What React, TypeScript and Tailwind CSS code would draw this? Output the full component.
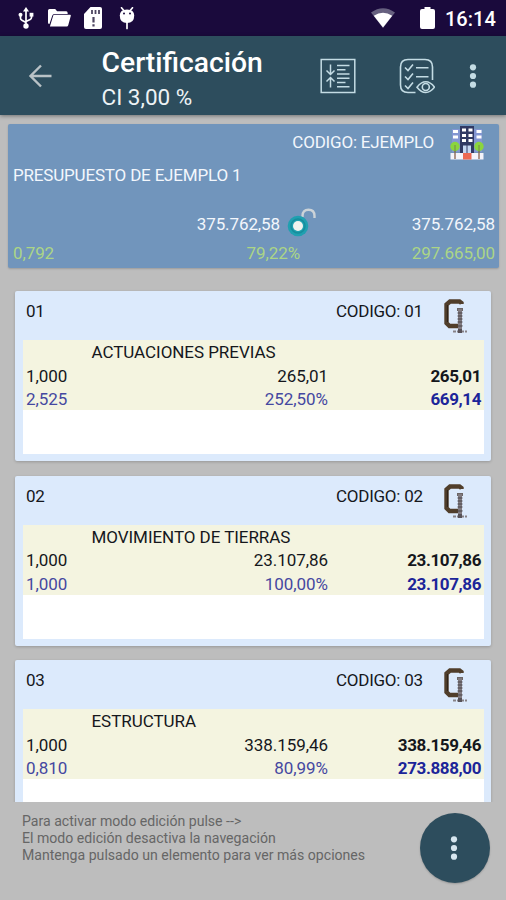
import type { ReactNode } from 'react'

type Chapter = {
  id: string
  title: string
  qty: string
  price: string
  total: string
  certQty: string
  certPercent: string
  certTotal: string
}

const chapters: Chapter[] = [
  { id: '01', title: 'ACTUACIONES PREVIAS', qty: '1,000', price: '265,01', total: '265,01', certQty: '2,525', certPercent: '252,50%', certTotal: '669,14' },
  { id: '02', title: 'MOVIMIENTO DE TIERRAS', qty: '1,000', price: '23.107,86', total: '23.107,86', certQty: '1,000', certPercent: '100,00%', certTotal: '23.107,86' },
  { id: '03', title: 'ESTRUCTURA', qty: '1,000', price: '338.159,46', total: '338.159,46', certQty: '0,810', certPercent: '80,99%', certTotal: '273.888,00' },
]

function UsbIcon() {
  return (
    <svg className="w-4 h-[22px]" viewBox="0 0 16 22" fill="none" stroke="white" strokeWidth="1.7">
      <path d="M8 4v14M2.5 8v3.2q0 1.3 1.4 2L8 15.4M13.5 8v2.4q0 1.3-1.4 2L8 14.4" />
      <path d="M8 0l3 4.6H5z" fill="white" stroke="none" />
      <circle cx="2.5" cy="7.8" r="2" fill="white" stroke="none" />
      <path d="M11.6 5.8h3.8v3.8h-3.8z" fill="white" stroke="none" />
      <circle cx="8" cy="19" r="2.7" fill="white" stroke="none" />
    </svg>
  )
}

function FolderIcon() {
  return (
    <svg className="w-[23px] h-[18px]" viewBox="0 0 24 18" preserveAspectRatio="none" fill="white">
      <path d="M1.5 0h6l2 2.2h9.5q1.5 0 1.5 1.8v1H6.5Q5 5 4.5 6.5L1.5 15Q0 15 0 13.5V1.5Q0 0 1.5 0z" />
      <path d="M6.4 5.7H23q1 0 .8 1l-2.6 9.300q-.4 1.500-1.700 1.500H2L5.400 6.700q.3-1 1-1z" />
    </svg>
  )
}

function SdIcon() {
  return (
    <svg className="w-[18px] h-[22px]" viewBox="0 0 18 22">
      <path d="M6.5 0H16q2 0 2 2v18q0 2-2 2H2q-2 0-2-2V7z" fill="white" />
      <path d="M8 3v4M11.5 3v4M15 3v4" stroke="#4d4560" strokeWidth="1.8" />
      <path d="M9.500 10v5.500M9.500 17.300v2.200" stroke="#4d4560" strokeWidth="2.2" />
    </svg>
  )
}

function DebugIcon() {
  return (
    <svg className="w-4 h-[23px]" viewBox="0 0 16 23">
      <path d="M2.5.8l2.500 3M13.5.8l-2.500 3M8 15v6.500" stroke="white" strokeWidth="1.7" strokeLinecap="round" />
      <path d="M.8 8.5Q.8 2.5 8 2.500t7.200 6Q15.200 16 8 16T.8 8.500z" fill="white" />
      <circle cx="5" cy="6.500" r="1" fill="#1a0a3c" />
      <circle cx="11" cy="6.500" r="1" fill="#1a0a3c" />
    </svg>
  )
}

function StatusBar() {
  return (
    <div className="h-9 shrink-0 bg-[#1a0a3c] flex items-center pl-[18px] pr-[10px] text-white">
      <UsbIcon />
      <div className="ml-[14px]"><FolderIcon /></div>
      <div className="ml-[13px]"><SdIcon /></div>
      <div className="ml-[17px]"><DebugIcon /></div>
      <svg className="ml-auto w-6 h-5" viewBox="0 0 24 20">
        <path d="M0 4.5Q12-4 24 4.5L12 20z" fill="#66607f" />
        <path d="M2.8 7.8Q12 1.5 21.2 7.8L12 19.5z" fill="white" />
      </svg>
      <svg className="ml-[25px] w-[15px] h-[22px]" viewBox="0 0 15 22" fill="white">
        <path d="M4.5 0h6v2H13q2 0 2 2v16q0 2-2 2H2q-2 0-2-2V4q0-2 2-2h2.5z" />
      </svg>
      <span className="ml-[10px] w-[51px] text-[20px] leading-none font-medium whitespace-nowrap pt-[2px]">16:14</span>
    </div>
  )
}

function Dots({ className }: { className: string }) {
  return (
    <svg className={className} viewBox="0 0 8 24" fill="currentColor">
      <circle cx="4" cy="3.3" r="3.1" />
      <circle cx="4" cy="12" r="3.1" />
      <circle cx="4" cy="20.7" r="3.1" />
    </svg>
  )
}

function Toolbar() {
  return (
    <header className="relative z-10 h-[79px] shrink-0 bg-[#2d4d5d] flex items-center pl-[28px] pr-[29px] text-[#c4dce4] shadow-[0_1px_4px_rgba(0,0,0,0.4)]">
      <svg className="w-6 h-6" viewBox="0 0 24 24" fill="none" stroke="#b9c2c6" strokeWidth="2.4">
        <path d="M23.5 12H2.5M13 1.5L2.5 12 13 22.5" />
      </svg>
      <div className="ml-[49.5px] self-start pt-[10px] text-white whitespace-nowrap">
        <h1 className="text-[28.3px] leading-[34px] font-medium">Certificación</h1>
        <p className="text-[22.5px] leading-[34px] text-[#edf3f5]">CI 3,00 %</p>
      </div>
      {/* Collapse rows */}
      <svg className="ml-auto w-9 h-9" viewBox="0 0 36 36" fill="none" stroke="currentColor" strokeWidth="1.5">
        <path d="M1.2 1.5h33.600v33H1.200z" />
        <path d="M10.5 6.5v10M6.5 12.5l4 4 4-4M10.5 29.5v-10M6.5 23.5l4-4 4 4" />
        <path d="M17 7.5h12.500M17 11.800h8.500M17 16h12.500M17 20.200h12.500M17 24.400h8.500M17 28.700h12.500" />
      </svg>
      {/* Checklist preview */}
      <svg className="ml-[43px] w-9 h-9" viewBox="0 0 36 36" fill="none" stroke="currentColor" strokeWidth="1.6">
        <path d="M16.5 34.5H9q-7.5 0-7.5-7.5V9Q1.5 1.5 9 1.5h17q7.5 0 7.5 7.5v13" />
        <path d="M6 9.5l3 3 5-6M6 18.5l3 3 5-6M6 27.5l3 3 5-6M17 9.8h12.500M17 18.800h12.500" />
        <path d="M18 29.2q4.200-5.400 8.800-5.400t8.700 5.400q-4.100 5.300-8.700 5.300T18 29.200z" />
        <circle cx="26.8" cy="29" r="3.5" />
      </svg>
      <Dots className="ml-[34px] w-[8px] h-6" />
    </header>
  )
}

function BuildingIcon() {
  return (
    <svg className="w-[34px] h-[34px]" viewBox="0 0 34 34">
      <path d="M2 3h8v23H2zM24 3h8v23h-8z" fill="#8396d2" />
      <path d="M3 4h5v3H3zM3 9.5h5v3H3zM26.500 4h5v3h-5zM26.500 9.500h5v3h-5z" fill="white" />
      <path d="M10 0h14v27H10z" fill="#303963" />
      <path d="M12 2.500h4v3h-4zM18.500 2.500h4v3h-4zM12 8h4v3h-4zM18.500 8h4v3h-4zM12 13h4v3h-4zM18.500 13h4v3h-4z" fill="white" />
      <path d="M13 19.500h3.500v7.500H13zM17.500 19.500H21v7.500h-3.500z" fill="#c5d7f2" />
      <path d="M.5 27h33v6.500H.5z" fill="#f4f4fa" />
      <path d="M13 27h8.500v6.500H13z" fill="#ed6953" />
      <path d="M5 20v13M29 20v13" stroke="#87624e" strokeWidth="1.3" />
      <circle cx="5" cy="20.500" r="4.700" fill="#8bd53d" />
      <circle cx="29" cy="20.500" r="4.700" fill="#8bd53d" />
      <path d="M5 19v7M29 19v7" stroke="#74864a" strokeWidth="1" />
    </svg>
  )
}

function LockIcon() {
  return (
    <svg className="w-[30px] h-[30px]" viewBox="0 0 30 30" fill="none">
      <path d="M15.5 9V8q0-6.2 6-6.2t6 6.200v2" stroke="#ccd3d8" strokeWidth="2.4" />
      <circle cx="11" cy="18" r="10.3" fill="#20a0b0" />
      <circle cx="11" cy="18" r="7" stroke="#178d9c" strokeWidth="1.5" />
      <circle cx="11" cy="18" r="5" fill="#f1f3ee" />
    </svg>
  )
}

function BudgetSummary() {
  return (
    <section className="mt-[9px] ml-2 mr-[7px] h-[144px] shrink-0 rounded-[2px] bg-[#7195bc] pl-[5px] pr-1 text-[17px] tracking-[-0.1px] text-[#f3f7fc] shadow-[0_1px_2px_rgba(0,0,0,0.18)]">
      <div className="flex h-[38px] pr-[11px]">
        <span className="ml-auto leading-[37px] tracking-[-0.2px]">CODIGO: EJEMPLO</span>
        <div className="ml-[16px] pt-[2px]"><BuildingIcon /></div>
      </div>
      <p className="h-[48px] leading-[27px] tracking-[-0.18px]">PRESUPUESTO DE EJEMPLO 1</p>
      <div className="flex h-[29px] leading-[29px]">
        <span className="w-[267px] text-right">375.762,58</span>
        <div className="ml-[7px] -mt-[2px]"><LockIcon /></div>
        <span className="ml-auto">375.762,58</span>
      </div>
      <div className="flex h-[29px] leading-[29px] text-[#acd586]">
        <span className="w-[90px]">0,792</span>
        <span className="w-[197px] text-right">79,22%</span>
        <span className="ml-auto">297.665,00</span>
      </div>
    </section>
  )
}

function ClampIcon() {
  return (
    <svg className="w-6 h-9" viewBox="0 0 24 36">
      <path d="M18.500 6V5L16.500 3.500H7L3.500 6.500v18.500L6.500 28h9l2.500-2" fill="none" stroke="#503e2b" strokeWidth="4.400" />
      <path d="M4.500 7v17" stroke="#2f2318" strokeWidth="1.200" />
      <path d="M14 10h6v3h-6z" fill="#6c6666" />
      <path d="M17 11v22" stroke="#817b80" strokeWidth="4" />
      <path d="M14.5 15h5M14.5 18h5M14.5 21h5M14.5 24h5M14.5 28h5" stroke="#484449" strokeWidth="1.2" />
      <path d="M10 33.500h14" stroke="#878287" strokeWidth="2" strokeDasharray="3 1" />
      <path d="M17 31v4" stroke="#575258" strokeWidth="4" />
    </svg>
  )
}

function Row({ className, children }: { className: string; children: ReactNode }) {
  return <div className={`grid grid-cols-[90px_212px_1fr] h-[23.5px] leading-[23.5px] ${className}`}>{children}</div>
}

function ChapterCard({ chapter }: { chapter: Chapter }) {
  return (
    <article className="h-[170px] shrink-0 rounded-[2px] bg-[#dceafc] pl-2 pr-[7px] text-[17px] tracking-[-0.05px] text-[#15171c] shadow-[0_1px_3px_rgba(0,0,0,0.2)]">
      <div className="flex h-[49px] pl-[3px] pr-[17px]">
        <span className="leading-[41px] tracking-[-0.3px]">{chapter.id}</span>
        <span className="ml-auto w-[87px] leading-[41px] tracking-[-0.25px] whitespace-nowrap">CODIGO: {chapter.id}</span>
        <div className="ml-[20px] pt-[7px]"><ClampIcon /></div>
      </div>
      <div className="h-[114px] bg-white">
        <div className="h-[70px] bg-[#f4f4e0] pl-[3px] pr-[3px] pt-px">
          <p className="h-[23.5px] pl-[65.5px] leading-[23.5px]">{chapter.title}</p>
          <Row className="">
            <span>{chapter.qty}</span>
            <span className="text-right">{chapter.price}</span>
            <span className="text-right font-bold tracking-[-0.4px]">{chapter.total}</span>
          </Row>
          <Row className="text-[#4548a0]">
            <span>{chapter.certQty}</span>
            <span className="text-right">{chapter.certPercent}</span>
            <span className="text-right font-bold tracking-[-0.4px] text-[#1c2599]">{chapter.certTotal}</span>
          </Row>
        </div>
      </div>
    </article>
  )
}

export default function App() {
  return (
    <div className="w-[506px] h-[900px] overflow-hidden flex flex-col bg-[#bdbdbd] font-['Roboto',sans-serif]">
      <StatusBar />
      <Toolbar />
      <BudgetSummary />
      <main className="mt-[20px] h-[514px] shrink-0 overflow-hidden flex flex-col gap-[14.5px] pt-[3px] pl-[15px] pr-[15px]">
        {chapters.map((chapter) => (
          <ChapterCard key={chapter.id} chapter={chapter} />
        ))}
      </main>
      <footer className="flex-1 flex justify-between pl-[22px] pr-[16px] pt-[11px]">
        <div className="text-[14.1px] leading-[17px] text-[#666666] whitespace-nowrap">
          <p>{'Para activar modo edición pulse -->'}</p>
          <p>El modo edición desactiva la navegación</p>
          <p>Mantenga pulsado un elemento para ver más opciones</p>
        </div>
        <button className="size-[70px] rounded-full bg-[#2d4d5d] flex items-center justify-center pr-[2px] text-[#d6e6ef] shadow-[0_1px_2px_rgba(0,0,0,0.2)]">
          <Dots className="w-[8px] h-6" />
        </button>
      </footer>
    </div>
  )
}
